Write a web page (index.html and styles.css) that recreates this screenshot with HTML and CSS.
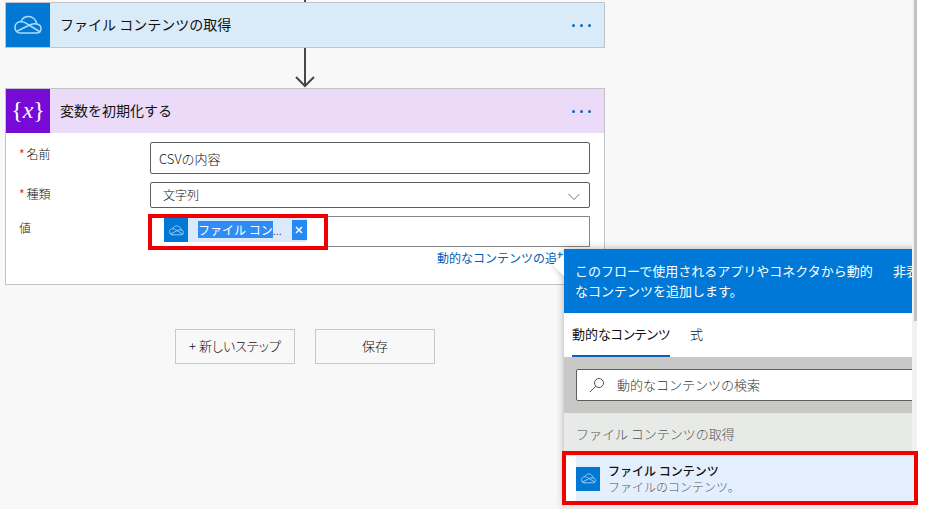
FILE: index.html
```html
<!DOCTYPE html>
<html lang="ja">
<head>
<meta charset="utf-8">
<title>フロー</title>
<link rel="stylesheet" href="styles.css">
</head>
<body>
<svg class="defs" aria-hidden="true">
  <symbol id="cloud" viewBox="0 0 28 20">
    <g fill="none" stroke="currentColor" stroke-linejoin="round" stroke-linecap="round">
      <path d="M6 18H22.500C25.500 18 27 16 27 13.500C27 11 25.500 9.500 22.800 9C22 4.500 18.500 1.500 14.500 1.500C11 1.500 8.300 3.300 7 6.500C3.500 6.700 1 9 1 12.300C1 15.500 3 18 6 18Z"/>
      <path d="M7 6.500C10 6.500 11.500 7.800 14 9.500L25.500 16.500M2.500 16.500L14.500 10.500C17 9 19.500 8.200 22.800 9"/>
    </g>
  </symbol>
</svg>
<div class="app">
  <main class="canvas">
    <div class="flow">
      <div class="stub"></div>
      <section class="card">
        <header class="head head-blue">
          <span class="tile"><svg class="tile-cloud"><use href="#cloud"/></svg></span>
          <h2 class="title">ファイル コンテンツの取得</h2>
          <button class="more" aria-label="メニュー"><i></i><i></i><i></i></button>
        </header>
      </section>
      <svg class="arrow" viewBox="0 0 22 40" aria-hidden="true"><path d="M11 0V38M2 29L11 38L20 29"/></svg>
      <section class="card">
        <header class="head head-purple">
          <span class="tile tile-purple">{<em>x</em>}</span>
          <h2 class="title">変数を初期化する</h2>
          <button class="more" aria-label="メニュー"><i></i><i></i><i></i></button>
        </header>
        <div class="form">
          <label class="label" for="name"><b>*</b>名前</label>
          <input class="box name" id="name" value="CSVの内容">
          <label class="label" for="kind"><b>*</b>種類</label>
          <div class="select">
            <select class="box kind" id="kind"><option>文字列</option></select>
            <svg class="chevron" viewBox="0 0 12 8" aria-hidden="true"><path d="M0.500 1L6 6.500L11.500 1"/></svg>
          </div>
          <span class="label" id="value-label">値</span>
          <div class="box value" role="textbox" tabindex="0" aria-labelledby="value-label">
            <span class="token">
              <span class="tile tile-small"><svg class="small-cloud"><use href="#cloud"/></svg></span>
              <span class="token-text"><mark>ファイル コン</mark>...</span>
              <button class="remove" aria-label="削除"><svg viewBox="0 0 8 8"><path d="M1 1L7 7M7 1L1 7"/></svg></button>
            </span>
            <span class="frame frame-value"></span>
          </div>
          <a class="add" href="#dynamic">動的なコンテンツの追加</a>
        </div>
      </section>
      <div class="actions">
        <button class="action">+ 新しいステップ</button>
        <button class="action">保存</button>
      </div>
    </div>
    <aside class="popup" id="dynamic">
      <div class="banner">
        <p>このフローで使用されるアプリやコネクタから動的なコンテンツを追加します。</p>
        <button class="hide">非表示</button>
      </div>
      <div class="tabs">
        <button class="tab active">動的なコンテンツ</button>
        <button class="tab">式</button>
      </div>
      <div class="search">
        <label class="search-box">
          <svg viewBox="0 0 16 16" aria-hidden="true"><circle cx="10" cy="6" r="4.500"/><path d="M6.800 9.200L1 15"/></svg>
          <input type="text" aria-label="検索" placeholder="動的なコンテンツの検索">
        </label>
      </div>
      <h3 class="group">ファイル コンテンツの取得</h3>
      <button class="item">
        <span class="tile tile-small"><svg class="small-cloud"><use href="#cloud"/></svg></span>
        <span class="item-text"><strong>ファイル コンテンツ</strong><span>ファイルのコンテンツ。</span></span>
      </button>
    </aside>
  </main>
  <div class="scroll"><div class="thumb"></div></div>
  <span class="frame frame-item"></span>
</div>
</body>
</html>
```
FILE: styles.css
```css
* { box-sizing: border-box; }
body {
  margin: 0;
  background: #fff;
  color: #111;
  font: 12px/16px "Noto Sans CJK JP", sans-serif;
  font-weight: 300;
}
button, input, select { font: inherit; color: inherit; border: 0; padding: 0; margin: 0; background: none; }
h2, h3, p { margin: 0; font-weight: inherit; }
.defs { display: none; }
.app {
  position: relative;
  display: flex;
  height: calc(100vh - 4px);
  margin-right: 9px;
}
.canvas { position: relative; flex: 1; overflow: hidden; background: #f8f8f8; }
.scroll { width: 5px; padding-left: 2px; background: #f1f1f1; }
.thumb { height: 63%; background: #c1c1c1; }

.flow { width: 600px; margin-left: 5px; }
.stub { width: 2px; height: 2px; margin: 0 auto; background: #484848; }
.card { background: #fff; border: 1px solid #c3c3cb; }
.head { display: flex; align-items: center; height: 44px; }
.head-blue { background: #d9eaf9; }
.head-purple { background: #ebdbf8; }
.tile {
  display: flex;
  align-items: center;
  justify-content: center;
  flex: none;
  width: 44px;
  height: 44px;
  background: #0078d4;
  color: #fff;
}
.tile-cloud { width: 28px; height: 20px; color: #a9dcff; stroke-width: 1.500; }
.tile-purple { padding-bottom: 2px; background: #770bd6; font: 24px/40px "Liberation Serif", serif; }
.tile-small { width: 24px; height: 24px; }
.small-cloud { width: 15px; height: 11px; color: #9bd2fa; stroke-width: 1.700; }
.title { flex: 1; margin-left: 10px; padding-bottom: 2px; font-size: 14px; font-weight: 400; line-height: 20px; color: #111; }
.more { display: flex; gap: 5px; padding: 10px; margin-right: 3px; }
.more i { width: 3px; height: 3px; border-radius: 2px; background: #0a6cc9; }
.arrow { display: block; width: 22px; height: 40px; margin: 0 auto; fill: none; stroke: #484848; stroke-width: 2; }

.form {
  display: grid;
  grid-template-columns: 131px 1fr;
  row-gap: 8px;
  padding: 9px 14px 18px 13px;
}
.label { padding-top: 4px; }
.label b { margin-right: 2px; font-weight: 400; color: #d13438; }
.box { width: 100%; border: 1px solid #605e5c; border-radius: 2px; background: #fff; }
.name { height: 32px; padding: 0 8px; font-size: 13px; }
.select { position: relative; display: flex; }
.kind { height: 26px; padding: 0 12px; appearance: none; }
.chevron { position: absolute; right: 10px; top: 11px; width: 12px; height: 8px; fill: none; stroke: #777; }
.value { position: relative; height: 31px; padding: 1px 13px; border-color: #8a8886; border-radius: 0; }
.token { display: inline-flex; align-items: center; height: 24px; background: #dbeafa; }
.token-text { margin: 0 10px; white-space: nowrap; }
mark { background: #2f8cf5; color: #fff; font-weight: 400; }
.remove { display: flex; align-items: center; justify-content: center; width: 15px; height: 20px; background: #2489f0; }
.remove svg { width: 8px; height: 8px; stroke: #fff; stroke-width: 1.500; }
.add { grid-column: 2; justify-self: end; margin: -5px 21px 0 0; color: #0060b8; font-weight: 400; text-decoration: none; }
.frame { position: absolute; border: 4px solid #f00000; pointer-events: none; }
.frame-value { left: -3px; top: -3px; width: 180px; height: 36px; }
.frame-item { left: 562px; right: -1px; bottom: 4px; height: 54px; }

.actions { display: flex; justify-content: center; gap: 20px; margin-top: 44px; }
.action {
  width: 120px;
  height: 35px;
  padding-bottom: 2px;
  border: 1px solid #c8c8c8;
  font-size: 13px;
  font-feature-settings: "palt";
}

.popup {
  position: absolute;
  z-index: 0;
  left: 564px;
  top: 249px;
  bottom: 0;
  width: 400px;
  background: #e8eae8;
  box-shadow: 0 0 8px rgba(0, 0, 0, .3);
}
.popup::before {
  content: "";
  position: absolute;
  z-index: -1;
  left: -8px;
  top: 8px;
  width: 16px;
  height: 16px;
  background: #fff;
  box-shadow: 0 0 6px rgba(0, 0, 0, .2);
  transform: rotate(45deg);
}
.banner {
  display: flex;
  align-items: flex-start;
  gap: 14px;
  height: 64px;
  padding: 12px 11px;
  background: #0078d7;
  color: #fff;
  font-size: 13px;
  font-weight: 400;
  line-height: 20px;
}
.banner p { width: 304px; }
.hide { flex: none; line-height: 20px; }
.tabs { display: flex; gap: 20px; height: 44px; padding: 0 8px; background: #fff; }
.tab { border-bottom: 2px solid transparent; font-size: 13px; font-feature-settings: "palt"; }
.tab.active { border-color: #0f5fbd; font-weight: 400; }
.search { padding: 12px; background: #c8c9c7; }
.search-box {
  display: flex;
  align-items: center;
  gap: 12px;
  height: 32px;
  padding: 0 12px;
  border: 1px solid #605e5c;
  border-radius: 2px;
  background: #fff;
}
.search-box svg { width: 16px; height: 16px; fill: none; stroke: #555; }
.search-box input { flex: 1; font-size: 13px; outline: 0; }
.search-box input::placeholder { color: #333; opacity: 1; }
.group { padding: 11px 12px 10px; font-size: 13px; line-height: 20px; color: #555; }
.item {
  display: flex;
  align-items: center;
  gap: 8px;
  width: 100%;
  height: 47px;
  margin-top: 2px;
  padding-bottom: 2px;
  border-left: 12px solid #fff;
  background: #e3effd;
  text-align: left;
}
.item-text { display: flex; flex-direction: column; color: #555; }
.item-text strong { color: #111; font-weight: 500; }
```
